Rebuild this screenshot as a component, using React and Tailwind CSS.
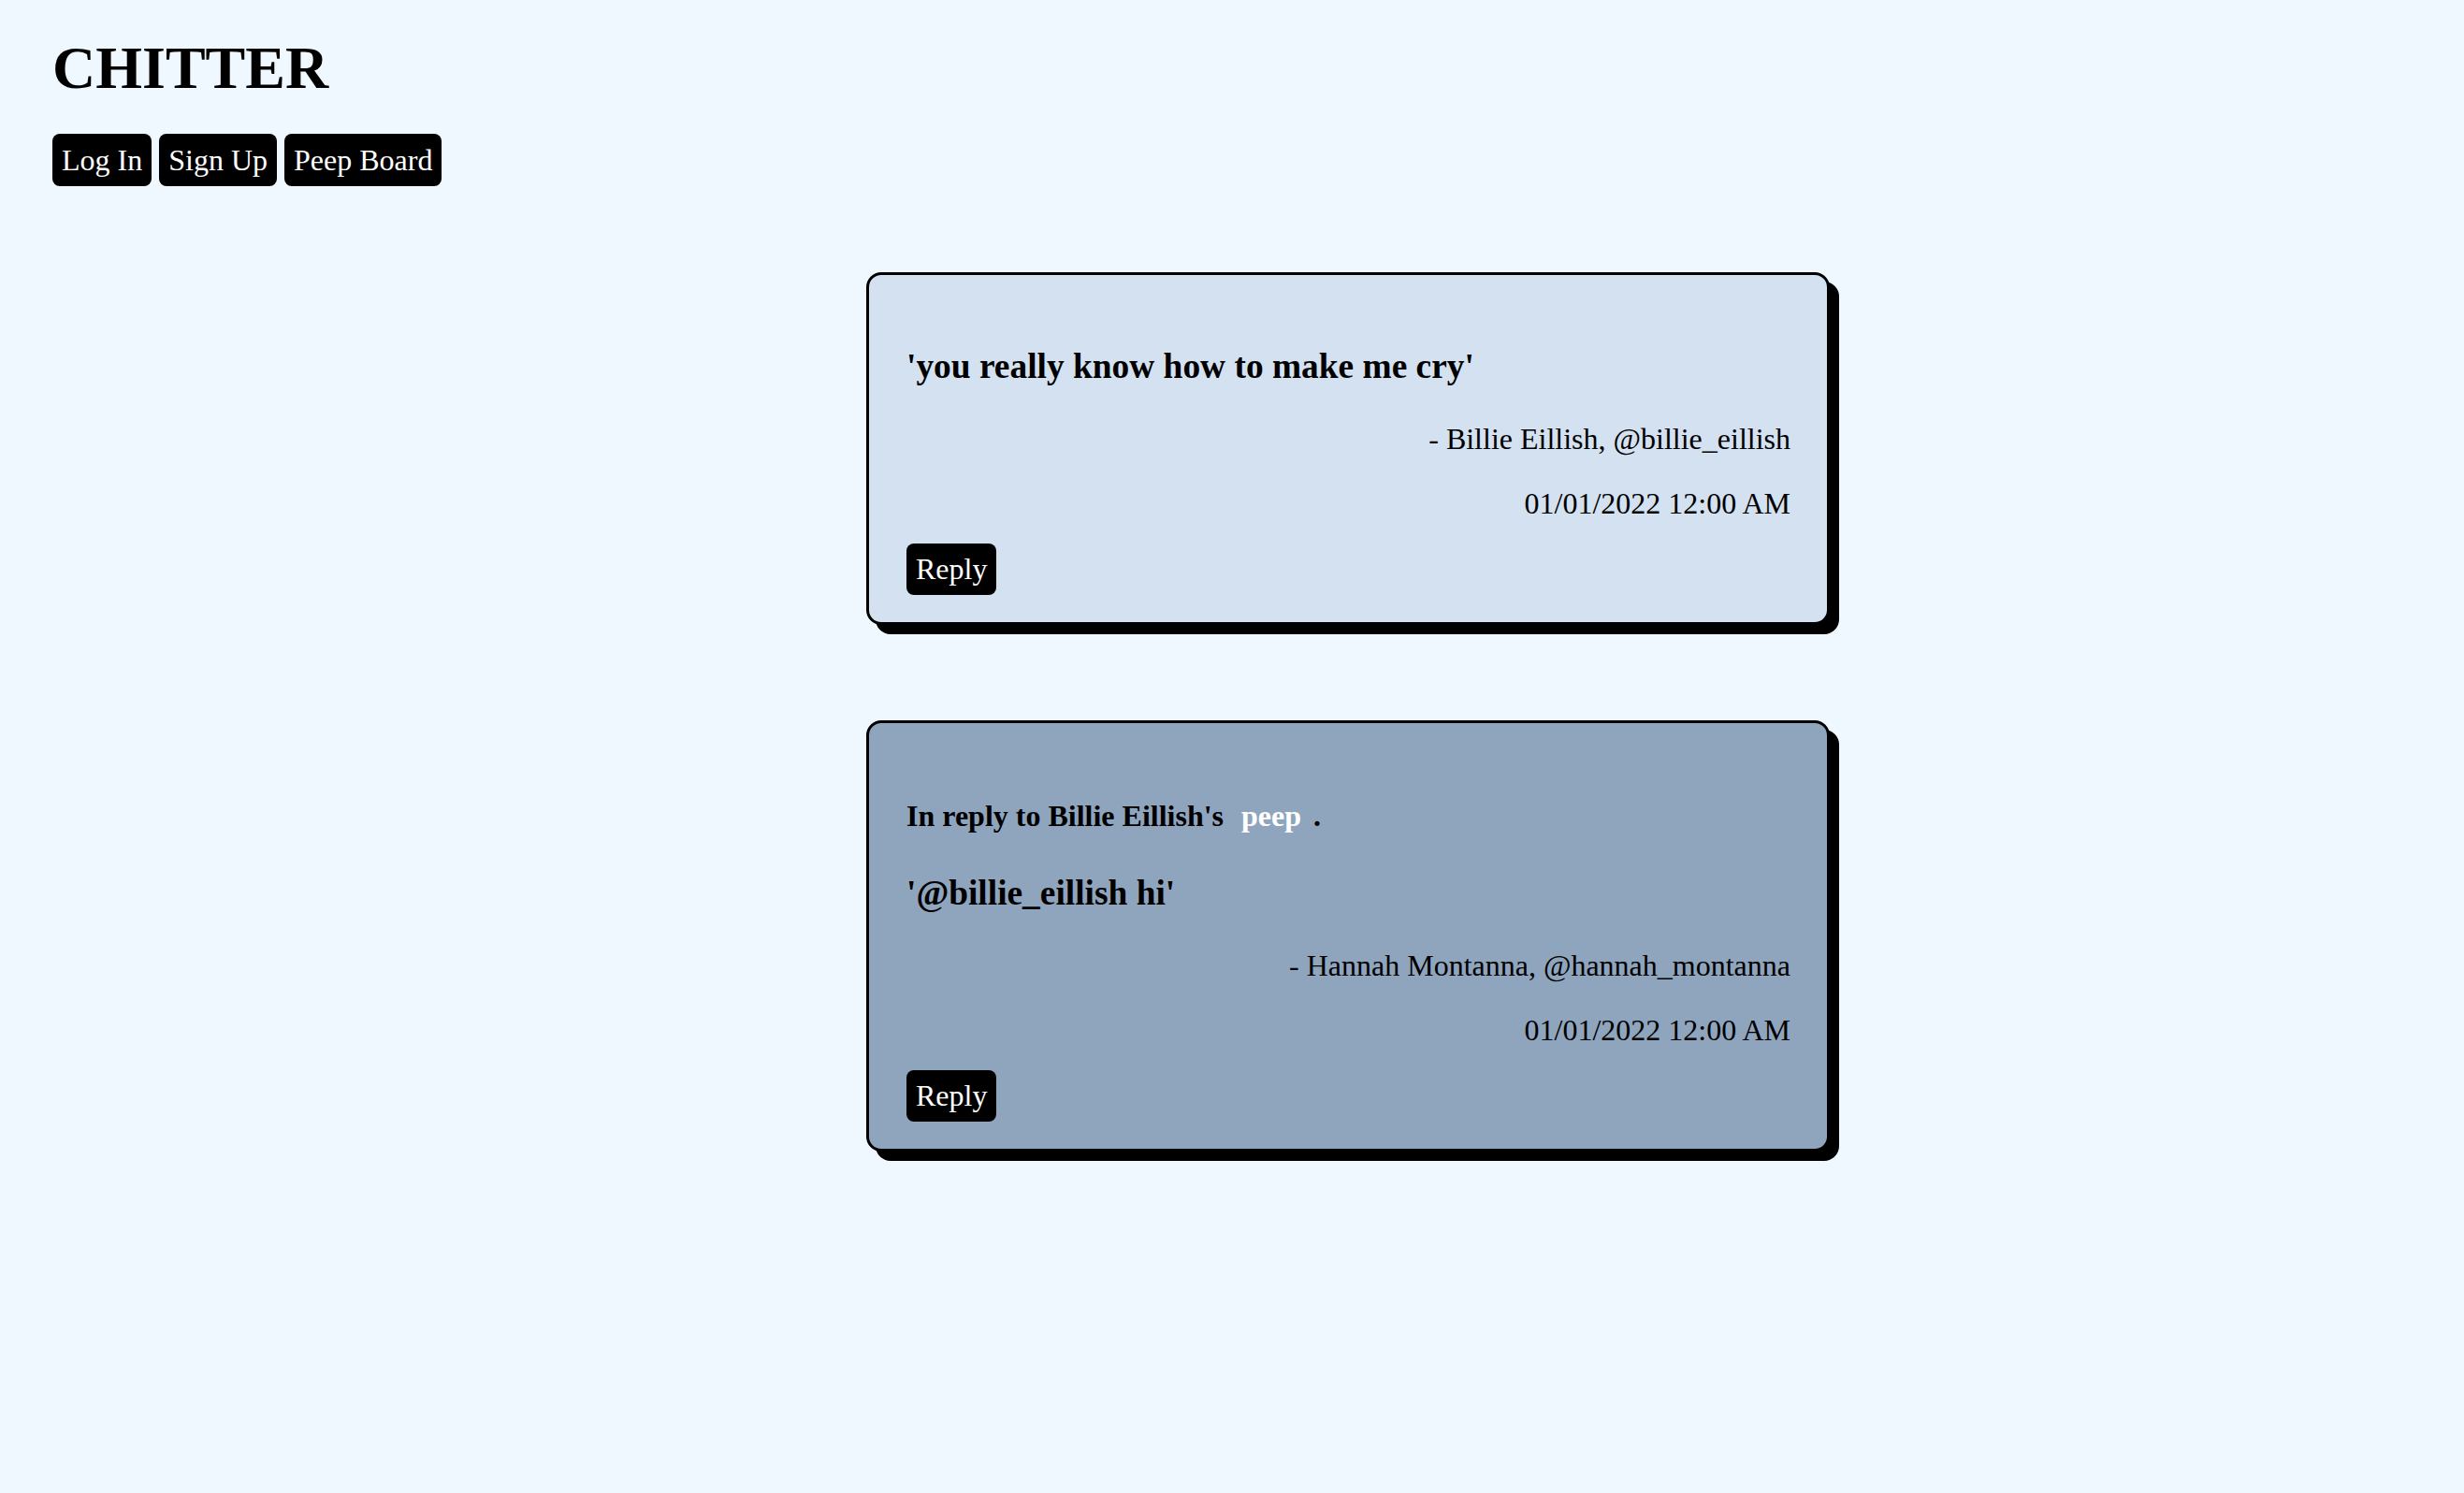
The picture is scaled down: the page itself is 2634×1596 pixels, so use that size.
const peeps = [
  {
    id: 1,
    text: "you really know how to make me cry",
    name: "Billie Eillish",
    handle: "billie_eillish",
    time: "01/01/2022 12:00 AM",
    replyTo: null,
  },
  {
    id: 2,
    text: "@billie_eillish hi",
    name: "Hannah Montanna",
    handle: "hannah_montanna",
    time: "01/01/2022 12:00 AM",
    replyTo: "Billie Eillish",
  },
];

function NavButton({ children }) {
  return (
    <button className="h-[56px] px-[10px] rounded-[8px] bg-black text-white text-[32px] leading-[37px]">
      {children}
    </button>
  );
}

function Peep({ peep }) {
  return (
    <div
      className={
        peep.replyTo
          ? "w-[1030px] flex flex-col border-[3px] border-black rounded-[16px] shadow-[10px_10px_0_0_#000] pl-[40px] pr-[39px] pt-[81px] pb-[29px] bg-[#8fa5be]"
          : "w-[1030px] flex flex-col border-[3px] border-black rounded-[16px] shadow-[10px_10px_0_0_#000] pl-[40px] pr-[39px] pt-[77px] pb-[29px] bg-[#d4e1f1]"
      }
    >
      {peep.replyTo && (
        <p className="text-[32px] leading-[37px] font-bold mb-[43px]">
          In reply to {peep.replyTo}'s
          <a className="ml-[19px] mr-[13px] text-white">peep</a>.
        </p>
      )}
      <h3 className="text-[37.4px] leading-[42px] font-bold">'{peep.text}'</h3>
      <p className="mt-[38px] text-[32px] leading-[37px] text-right">
        - {peep.name}, @{peep.handle}
      </p>
      <p className="mt-[32px] text-[32px] leading-[37px] text-right">{peep.time}</p>
      <div className="mt-[24px]">
        <button className="h-[55px] px-[10px] rounded-[8px] bg-black text-white text-[32px] leading-[37px]">
          Reply
        </button>
      </div>
    </div>
  );
}

export default function App() {
  return (
    <div className="min-h-screen bg-[#f0f8ff] text-black font-['Liberation_Serif',serif] pb-[200px]">
      {/* Header */}
      <header className="pl-[56px] pt-[33px]">
        <h1 className="text-[64px] leading-[79px] font-bold">CHITTER</h1>
        <nav className="mt-[31px] flex gap-[8px]">
          <NavButton>Log In</NavButton>
          <NavButton>Sign Up</NavButton>
          <NavButton>Peep Board</NavButton>
        </nav>
      </header>

      {/* Peeps */}
      <main className="mt-[92px] pl-[926px] flex flex-col items-start gap-[102px]">
        {peeps.map((p) => (
          <Peep key={p.id} peep={p} />
        ))}
      </main>
    </div>
  );
}
